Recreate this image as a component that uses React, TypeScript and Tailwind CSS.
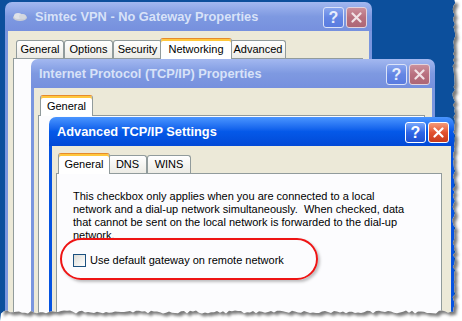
import React from 'react';

type Tab = { label: string; w: number; selected?: boolean };

function seeded(seed: number) {
  let s = seed;
  return () => {
    s = (s * 9301 + 49297) % 233280;
    return s / 233280;
  };
}

function TornEdge() {
  const r = seeded(11);
  const pts: string[] = [];
  for (let y = 0; y <= 312; y += 3) pts.push(`${(454 + r() * 3 - 1.5).toFixed(1)},${y}`);
  for (let x = 451; x >= 0; x -= 3) pts.push(`${x},${(312 + r() * 3 - 1.5).toFixed(1)}`);
  const edge = pts.join(' L ');
  const outside = `M 462,0 L ${edge} L 0,321 L 462,321 Z`;
  const inside = `M 0,0 L ${edge} Z`;
  return (
    <svg className="absolute inset-0 pointer-events-none" width="462" height="321" viewBox="0 0 462 321">
      <defs>
        <clipPath id="out">
          <path d={outside} />
        </clipPath>
        <filter id="blur" x="-5%" y="-5%" width="110%" height="110%">
          <feGaussianBlur stdDeviation="1.6" />
        </filter>
      </defs>
      <path d={outside} fill="#ffffff" />
      <g clipPath="url(#out)">
        <path d={inside} transform="translate(3,3)" fill="#7a7a7a" filter="url(#blur)" />
      </g>
    </svg>
  );
}

function CapButton({ kind, active }: { kind: 'help' | 'close'; active: boolean }) {
  const bg =
    kind === 'help'
      ? active
        ? 'bg-gradient-to-b from-[#7aa7fb] via-[#2f66e6] to-[#1f50d2] border-white'
        : 'bg-gradient-to-b from-[#8aa6ee] via-[#6385e4] to-[#5a7ce0] border-[#dbe3f8]'
      : active
        ? 'bg-gradient-to-b from-[#f39a78] via-[#e2522f] to-[#c7391b] border-white'
        : 'bg-gradient-to-b from-[#cb909c] via-[#b8707f] to-[#ad6676] border-[#e3d3dc]';
  return (
    <div className={`w-[21px] h-[21px] rounded-[3px] border ${bg} flex items-center justify-center`}>
      {kind === 'help' ? (
        <span className={`text-[16px] leading-none font-bold font-['Liberation_Sans',Arial,sans-serif] ${active ? 'text-white' : 'text-[#e8eefc]'}`}>?</span>
      ) : (
        <svg width="11" height="11" viewBox="0 0 11 11">
          <path d="M1.5 1.5 L9.5 9.5 M9.5 1.5 L1.5 9.5" stroke={active ? '#ffffff' : '#f1e2e6'} strokeWidth="2.2" strokeLinecap="round" />
        </svg>
      )}
    </div>
  );
}

function ConnIcon() {
  return (
    <svg width="16" height="10" viewBox="0 0 16 10">
      <ellipse cx="8" cy="5.5" rx="7" ry="3.5" fill="#c9cdd6" />
      <ellipse cx="6" cy="4" rx="4" ry="3" fill="#dfe2e8" />
      <ellipse cx="10.5" cy="4.5" rx="3.5" ry="2.5" fill="#d3d7df" />
    </svg>
  );
}

function Tabs({ tabs, ml }: { tabs: Tab[]; ml: string }) {
  return (
    <div className={`flex items-end h-[21px] ${ml}`}>
      {tabs.map((t) =>
        t.selected ? (
          <div
            key={t.label}
            className="relative z-10 -mx-[2px] h-[21px] -mb-px bg-white border border-b-0 border-[#919b9c] border-t-[#e68b2c] rounded-t-[3px] shadow-[inset_0_2px_0_#ffc73c] flex items-center justify-center text-[11px] text-black"
            style={{ width: t.w }}
          >
            {t.label}
          </div>
        ) : (
          <div
            key={t.label}
            className="h-[18px] bg-gradient-to-b from-white to-[#ecebe5] border border-b-0 border-[#919b9c] rounded-t-[3px] flex items-center justify-center text-[11px] text-black"
            style={{ width: t.w }}
          >
            {t.label}
          </div>
        )
      )}
    </div>
  );
}

function Window({
  title,
  active,
  icon,
  className,
  tabs,
  tabsMl,
  padX,
  children,
}: {
  title: string;
  active: boolean;
  icon?: boolean;
  className: string;
  tabs: Tab[];
  tabsMl: string;
  padX: string;
  children?: React.ReactNode;
}) {
  const border = active ? 'border-[#0553e1]' : 'border-[#7a96df]';
  return (
    <div className={`absolute flex flex-col ${className}`}>
      <div
        className={`h-[29px] shrink-0 rounded-t-[7px] flex items-start pr-[5px] ${
          active
            ? 'bg-gradient-to-b from-[#4a95ff] via-[#0559e9] to-[#0249d6]'
            : 'bg-gradient-to-b from-[#a3b8f0] via-[#7e99e1] to-[#7690de]'
        } ${icon ? 'pl-[7px]' : 'pl-[8px]'}`}
      >
        <div className="flex-1 h-full flex items-center gap-[7px]">
          {icon && <ConnIcon />}
          <span
            className={`text-[12.8px] font-bold font-['Liberation_Sans',Arial,sans-serif] ${
              active ? 'text-white' : 'text-[#d8e2f8]'
            }`}
          >
            {title}
          </span>
        </div>
        <div className="flex gap-[2px] pt-[5px]">
          <CapButton kind="help" active={active} />
          <CapButton kind="close" active={active} />
        </div>
      </div>
      <div className={`flex-1 flex flex-col bg-[#ece9d8] border-x-[3px] ${border} ${padX} pt-[6px]`}>
        <Tabs tabs={tabs} ml={tabsMl} />
        <div className="flex-1 bg-[#fcfcfe] border border-[#919b9c]">{children}</div>
      </div>
    </div>
  );
}

export default function App() {
  return (
    <div className="relative w-[462px] h-[321px] overflow-hidden bg-white font-['Liberation_Sans',Arial,sans-serif]">
      <div className="relative w-full h-full bg-[#0c4f9c]">
        <Window
          title="Simtec VPN - No Gateway Properties"
          active={false}
          icon
          className="left-[5px] top-[2px] w-[367px] h-[330px]"
          tabs={[
            { label: 'General', w: 48 },
            { label: 'Options', w: 49 },
            { label: 'Security', w: 49 },
            { label: 'Networking', w: 72, selected: true },
            { label: 'Advanced', w: 56 },
          ]}
          tabsMl="ml-[3px]"
          padX="pl-[5px] pr-[6px] pt-[6px]"
        />
        <Window
          title="Internet Protocol (TCP/IP) Properties"
          active={false}
          className="left-[31px] top-[59px] w-[404px] h-[280px]"
          tabs={[{ label: 'General', w: 53, selected: true }]}
          tabsMl="ml-[4px]"
          padX="pl-[4px] pr-[7px]"
        />
        <Window
          title="Advanced TCP/IP Settings"
          active
          className="left-[49px] top-[117px] w-[405px] h-[220px]"
          tabs={[
            { label: 'General', w: 52, selected: true },
            { label: 'DNS', w: 39 },
            { label: 'WINS', w: 44 },
          ]}
          tabsMl="ml-[4px]"
          padX="pl-[4px] pr-[9px]"
        >
          <div className="pl-[16px] pt-[16px] text-[11px] leading-[13px] text-black whitespace-pre">
            <p>
              This checkbox only applies when you are connected to a local
              <br />
              network and a dial-up network simultaneously.  When checked, data
              <br />
              that cannot be sent on the local network is forwarded to the dial-up
              <br />
              network.
            </p>
            <label className="flex items-center gap-[4px] mt-[12px]">
              <span className="w-[13px] h-[13px] border border-[#1c5180] bg-gradient-to-br from-[#dcdcd7] to-white" />
              <span>Use default gateway on remote network</span>
            </label>
          </div>
        </Window>
        <div className="absolute left-[60px] top-[238px] w-[258px] h-[42px] rounded-[21px] border-2 border-[#ee1414] shadow-[2px_2px_3px_rgba(0,0,0,0.25)]" />
      </div>
      <TornEdge />
    </div>
  );
}
